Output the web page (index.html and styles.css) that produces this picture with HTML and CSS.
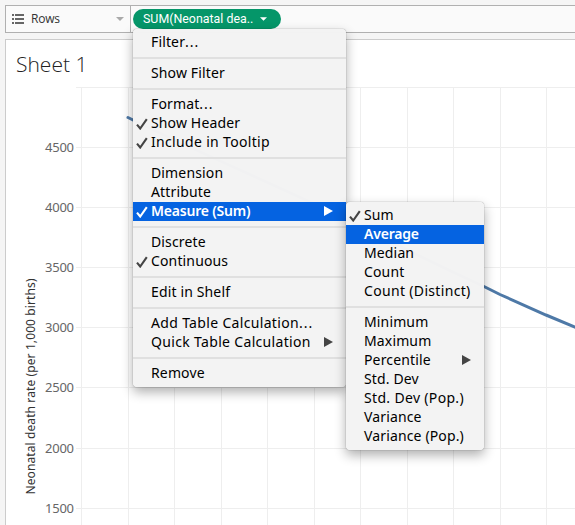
FILE: index.html
```html
<!DOCTYPE html>
<html lang="en">
<head>
<meta charset="utf-8">
<title>Sheet 1</title>
<link rel="stylesheet" href="styles.css">
</head>
<body>
<svg class="defs" width="0" height="0">
  <symbol id="check" viewBox="0 0 12 12"><path d="M1 6.600 4.200 10.500 10.800 1.200" fill="none" stroke="currentColor" stroke-width="2.1"/></symbol>
  <symbol id="arrow" viewBox="0 0 9 10"><path d="M0 0 9 5 0 10z" fill="currentColor"/></symbol>
</svg>
<div class="shelf">
  <div class="shelf-name">
    <svg class="rows-icon" width="12" height="10" viewBox="0 0 12 10"><path d="M0 0h2v2H0zM3 0h9v2H3zM0 4h2v2H0zM3 4h9v2H3zM0 8h2v2H0zM3 8h9v2H3z" fill="#666"/></svg>
    <span class="shelf-text">Rows</span>
    <svg class="caret" width="8" height="4" viewBox="0 0 8 4"><path d="M0 0h8L4 4z" fill="#aaa"/></svg>
  </div>
  <div class="pill"><span>SUM(Neonatal dea..</span><svg width="7" height="4" viewBox="0 0 8 4"><path d="M0 0h8L4 4z" fill="#fff"/></svg></div>
</div>
<div class="sheet">
  <h1 class="title">Sheet 1</h1>
  <svg class="chart" width="569" height="445" viewBox="6 80 569 445">
    <path class="grid" d="M76 87.5H575M76 147.5H575M76 207.5H575M76 267.5H575M76 327.5H575M76 387.5H575M76 448.5H575M76 508.5H575M81.5 87V525M128.5 87V525M174.5 87V525M221.5 87V525M267.5 87V525M314.5 87V525M360.5 87V525M407.5 87V525M453.5 87V525M500.5 87V525M546.5 87V525"/>
    <path class="trend" d="M128 117.500C200 154 300 195 360 226S450 271 485 287L500 294.500 546 315 577 328"/>
    <g class="ticks">
      <text x="45" y="152" textLength="29">4500</text>
      <text x="45" y="212" textLength="29">4000</text>
      <text x="45" y="272" textLength="29">3500</text>
      <text x="45" y="332" textLength="29">3000</text>
      <text x="45" y="392" textLength="29">2500</text>
      <text x="45" y="453" textLength="29">2000</text>
      <text x="45" y="513" textLength="29">1500</text>
    </g>
    <text class="axis" transform="translate(35 494.500) rotate(-90)" textLength="216">Neonatal death rate (per 1,000 births)</text>
  </svg>
</div>
<ul class="menu main">
  <li>Filter<span class="dots">...</span></li>
  <li class="sep"></li>
  <li>Show Filter</li>
  <li class="sep"></li>
  <li>Format<span class="dots">...</span></li>
  <li><svg class="check"><use href="#check"/></svg>Show Header</li>
  <li class="wide"><svg class="check"><use href="#check"/></svg>Include in Tooltip</li>
  <li class="sep"></li>
  <li>Dimension</li>
  <li>Attribute</li>
  <li class="on"><svg class="check"><use href="#check"/></svg>Measure (Sum)<svg class="arrow"><use href="#arrow"/></svg></li>
  <li class="sep"></li>
  <li>Discrete</li>
  <li><svg class="check"><use href="#check"/></svg>Continuous</li>
  <li class="sep"></li>
  <li>Edit in Shelf</li>
  <li class="sep"></li>
  <li class="wide">Add Table Calculation<span class="dots">...</span></li>
  <li class="wide">Quick Table Calculation<svg class="arrow"><use href="#arrow"/></svg></li>
  <li class="sep"></li>
  <li>Remove</li>
</ul>
<ul class="menu sub">
  <li><svg class="check"><use href="#check"/></svg>Sum</li>
  <li class="on">Average</li>
  <li>Median</li>
  <li>Count</li>
  <li class="wide">Count (Distinct)</li>
  <li class="sep"></li>
  <li>Minimum</li>
  <li>Maximum</li>
  <li>Percentile<svg class="arrow"><use href="#arrow"/></svg></li>
  <li>Std. Dev</li>
  <li class="wide">Std. Dev (Pop.)</li>
  <li>Variance</li>
  <li>Variance (Pop.)</li>
</ul>
</body>
</html>
```
FILE: styles.css
```css
* { box-sizing: border-box; }
body {
  margin: 0;
  width: 575px;
  height: 525px;
  overflow: hidden;
  padding: 5px 0 0 5px;
  background: #f5f5f5;
  font-family: "Noto Sans", sans-serif;
}
.defs { position: absolute; }
.shelf {
  display: flex;
  height: 28px;
  background: #fafafa;
  border: 1px solid #b0b0b0;
  border-right: 0;
}
.shelf-name {
  display: flex;
  align-items: center;
  width: 125px;
  padding: 0 6px 1px;
  border-right: 1px solid #b0b0b0;
}
.shelf-text {
  margin-left: 7px;
  font: 12px "Open Sans", sans-serif;
  letter-spacing: -.2px;
  color: #333;
}
.caret { margin-left: auto; }
.pill {
  display: flex;
  align-items: center;
  justify-content: space-between;
  width: 148px;
  height: 20px;
  margin: 3px 0 0 2px;
  padding: 0 14px 1px 10px;
  border-radius: 10px;
  background: #059669;
  color: #fff;
  font: 12.4px Roboto, sans-serif;
}
.sheet {
  height: 490px;
  margin-top: 6px;
  border: 1px solid #ccc;
  border-width: 1px 0 0 1px;
  background: #fff;
}
.title {
  height: 40px;
  margin: 0;
  padding: 8px 0 0 10px;
  font: 300 21px/32px "Open Sans", sans-serif;
  color: #222;
}
.chart { display: block; }
.grid { stroke: #eee; fill: none; }
.trend { stroke: #4e79a7; stroke-width: 3; stroke-linecap: round; fill: none; }
.ticks { font-size: 13px; fill: #666; }
.axis { font-size: 12px; fill: #333; }
.menu {
  position: absolute;
  margin: 0;
  padding: 4px 0;
  list-style: none;
  background: rgba(243, 243, 243, .99);
  border-radius: 4px;
  box-shadow: 0 0 1px rgba(0, 0, 0, .65), 0 5px 12px rgba(0, 0, 0, .32);
  font-size: 14px;
  line-height: 19px;
  letter-spacing: .14px;
  color: #000;
}
.main { left: 133px; top: 29px; width: 213px; }
.sub { left: 346px; top: 202px; width: 138px; }
.menu li {
  display: flex;
  align-items: center;
  height: 19px;
  padding: 0 13px 2px 18px;
  white-space: pre;
}
.menu .sep { height: 12px; padding: 0; }
.sep::before { content: ""; flex: 1; height: 2px; background: #e0e0e0; }
.menu .on { background: #0563e1; color: #fff; font-weight: 600; letter-spacing: -.2px; }
.menu .wide { letter-spacing: .33px; }
.dots { letter-spacing: 1px; }
.check { width: 12px; height: 12px; margin: 2px 3px 0 -15px; color: #444; }
.arrow { width: 9px; height: 10px; margin-left: auto; color: #444; }
.on .check, .on .arrow { color: #fff; }
```
